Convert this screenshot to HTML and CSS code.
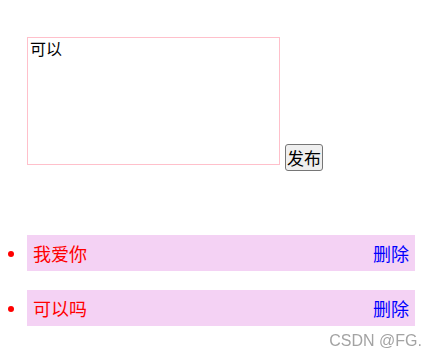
FILE: index.html
```html
<!DOCTYPE html>
<html lang="zh">
<head>
<meta charset="utf-8">
<title>留言</title>
<link rel="stylesheet" href="styles.css">
</head>
<body>
<div class="composer">
  <textarea class="input">可以</textarea>
  <button class="publish">发布</button>
</div>
<ul class="messages">
  <li class="message"><span class="text">我爱你</span><a class="delete">删除</a></li>
  <li class="message"><span class="text">可以吗</span><a class="delete">删除</a></li>
</ul>
<div class="watermark">CSDN @FG.</div>
</body>
</html>
```

FILE: styles.css
```css
html, body {
  height: 100%;
}
body {
  margin: 8px;
  font-family: "Noto Sans CJK SC", "Liberation Sans", sans-serif;
  background: #fff;
  position: relative;
}
.composer {
  display: flex;
  align-items: flex-end;
  padding: 29px 0 0 19px;
}
.input {
  box-sizing: border-box;
  width: 253px;
  height: 128px;
  border: 1px solid #ffc0cb;
  padding: 0 2px;
  margin: 0;
  font-family: "Noto Sans CJK SC", sans-serif;
  font-size: 16px;
  line-height: 20px;
  color: #000;
  resize: none;
  outline: none;
}
.publish {
  box-sizing: border-box;
  margin: 0 0 -6px 5px;
  width: 38px;
  height: 27px;
  padding: 0;
  border: 1px solid #767676;
  border-radius: 3px;
  background: #efefef;
  font-family: "Noto Sans CJK SC", sans-serif;
  font-size: 17px;
  line-height: 23px;
  color: #000;
}
.messages {
  list-style: none;
  margin: 70px 0 0;
  padding: 0 0 0 19px;
}
.message {
  position: relative;
  box-sizing: border-box;
  display: flex;
  justify-content: space-between;
  width: 388px;
  height: 36px;
  padding: 0 6px;
  margin-bottom: 19px;
  background: #f4d2f4;
  font-size: 18px;
  line-height: 36px;
  color: #ff0000;
}
.message::before {
  content: "";
  position: absolute;
  left: -19px;
  top: 16px;
  width: 6px;
  height: 6px;
  border-radius: 50%;
  background: #ff0000;
}
.delete {
  color: #0000ff;
  cursor: pointer;
}
.watermark {
  position: fixed;
  right: 20px;
  bottom: 6px;
  font-family: "Liberation Sans", Arial, sans-serif;
  font-size: 16px;
  color: #a3a3a3;
}
```
